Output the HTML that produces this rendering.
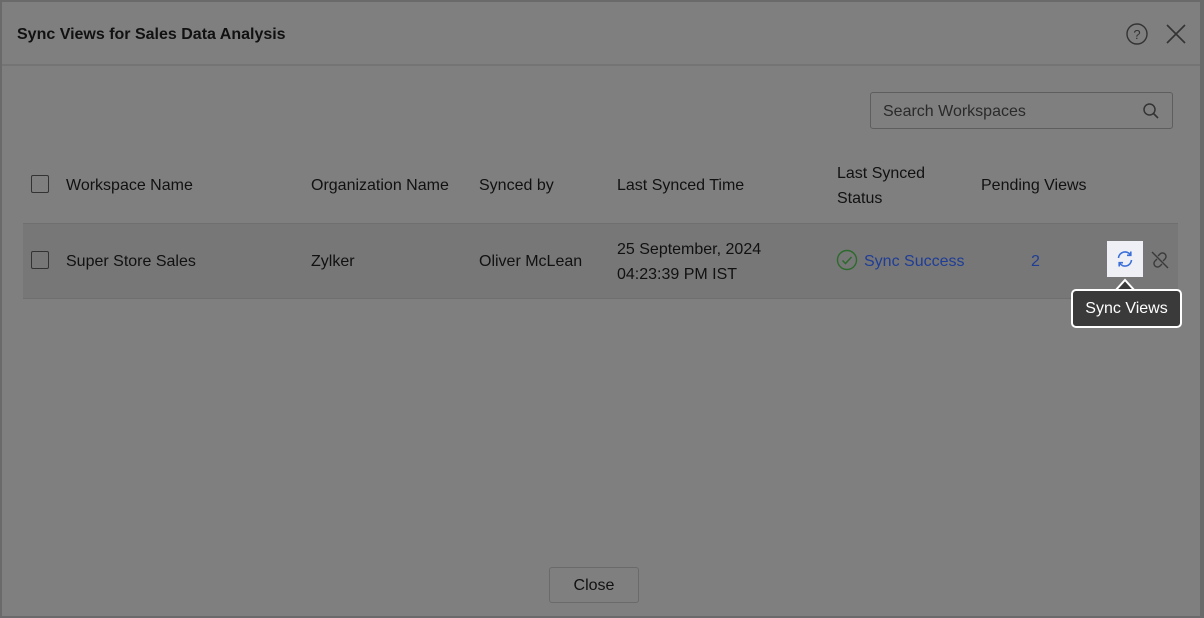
<!DOCTYPE html>
<html><head><meta charset="utf-8"><style>
*{box-sizing:border-box;margin:0;padding:0}
body{width:1204px;height:618px;background:#6a6a6a;font-family:"Liberation Sans",sans-serif;position:relative;overflow:hidden;color:#111}
.dlg{position:absolute;left:2px;top:2px;width:1198px;height:614px;background:#7f7f7f}
.hdr{position:absolute;left:0;top:0;width:100%;height:64px;border-bottom:2px solid #747474}
.title{position:absolute;left:15px;top:24px;font-size:16px;font-weight:bold;color:#111}
.t{position:absolute;font-size:16px;color:#111;line-height:25px}
.cb{position:absolute;width:18px;height:18px;border:1.5px solid #333;border-radius:2px}
.row{position:absolute;left:21px;top:221px;width:1155px;height:76px;background:#777;border-top:1px solid #6f6f6f;border-bottom:1px solid #6f6f6f}
.search{position:absolute;left:868px;top:90px;width:303px;height:37px;border:1.5px solid #5e5e5e;border-radius:3px}
.blue{color:#1f3d96}
.btn{position:absolute;left:547px;top:565px;width:90px;height:36px;border:1px solid #6a6a6a;border-radius:3px;font-size:16px;text-align:center;line-height:36px;color:#111}
.tip{position:absolute;left:1069px;top:287px;width:111px;height:39px;background:#3a3a3a;border:2px solid #fff;border-radius:5px;color:#fff;font-size:16px;text-align:center;line-height:35px}
</style></head><body>
<div class="dlg">
<div class="hdr"><div class="title">Sync Views for Sales Data Analysis</div>
<svg style="position:absolute;left:1123px;top:20px" width="24" height="24" viewBox="0 0 24 24"><circle cx="12" cy="12" r="10" fill="none" stroke="#333" stroke-width="1.4"/><text x="12" y="17" text-anchor="middle" font-size="13" font-family="Liberation Sans" fill="#333">?</text></svg>
<svg style="position:absolute;left:1163px;top:21px" width="22" height="22" viewBox="0 0 22 22"><path d="M2 2L20 20M20 2L2 20" stroke="#333" stroke-width="1.6"/></svg>
</div>
<div class="search"><span class="t" style="left:12px;top:6px;color:#2a2a2a">Search Workspaces</span>
<svg style="position:absolute;left:271px;top:9px" width="18" height="18" viewBox="0 0 18 18"><circle cx="7.5" cy="7.5" r="5.5" fill="none" stroke="#333" stroke-width="1.5"/><path d="M11.5 11.5L16 16" stroke="#333" stroke-width="1.6"/></svg></div>
<div class="cb" style="left:29px;top:173px"></div>
<span class="t" style="left:64px;top:171px">Workspace Name</span>
<span class="t" style="left:309px;top:171px">Organization Name</span>
<span class="t" style="left:477px;top:171px">Synced by</span>
<span class="t" style="left:615px;top:171px">Last Synced Time</span>
<span class="t" style="left:835px;top:159px">Last Synced<br>Status</span>
<span class="t" style="left:979px;top:171px">Pending Views</span>
<div class="row"></div>
<div class="cb" style="left:29px;top:249px"></div>
<span class="t" style="left:64px;top:247px">Super Store Sales</span>
<span class="t" style="left:309px;top:247px">Zylker</span>
<span class="t" style="left:477px;top:247px">Oliver McLean</span>
<span class="t" style="left:615px;top:235px">25 September, 2024<br>04:23:39 PM IST</span>
<svg style="position:absolute;left:834px;top:247px" width="22" height="22" viewBox="0 0 22 22"><circle cx="11" cy="11" r="9.5" fill="none" stroke="#2d6a2d" stroke-width="1.4"/><path d="M6.5 11.5l3 3 6-6.5" fill="none" stroke="#2d6a2d" stroke-width="1.5"/></svg>
<span class="t blue" style="left:862px;top:247px">Sync Success</span>
<span class="t blue" style="left:1029px;top:247px">2</span>
<div style="position:absolute;left:1105px;top:239px;width:36px;height:36px;background:#eef0f6"></div>
<svg style="position:absolute;left:1113px;top:247px" width="20" height="20" viewBox="0 0 20 20"><path d="M3.5 9A6.5 6.5 0 0 1 15.5 6M16.5 11A6.5 6.5 0 0 1 4.5 14" fill="none" stroke="#3b6fd9" stroke-width="1.6"/><path d="M15.8 2.5V6.3H12" fill="none" stroke="#3b6fd9" stroke-width="1.6"/><path d="M4.2 17.5V13.7H8" fill="none" stroke="#3b6fd9" stroke-width="1.6"/></svg>
<svg style="position:absolute;left:1148px;top:248px" width="20" height="20" viewBox="0 0 20 20"><g fill="none" stroke="#3a3a3a" stroke-width="1.4"><path d="M8 6l2-2a3.5 3.5 0 0 1 5 5l-2 2M12 14l-2 2a3.5 3.5 0 0 1-5-5l2-2"/><path d="M2 2L18 18"/></g></svg>
<svg style="position:absolute;left:1113px;top:276px" width="20" height="13" viewBox="0 0 20 13"><path d="M0 13L10 2L20 13Z" fill="#3a3a3a" stroke="#fff" stroke-width="2"/></svg>
<div class="tip">Sync Views</div>
<div class="btn">Close</div>
</div>
</body></html>
